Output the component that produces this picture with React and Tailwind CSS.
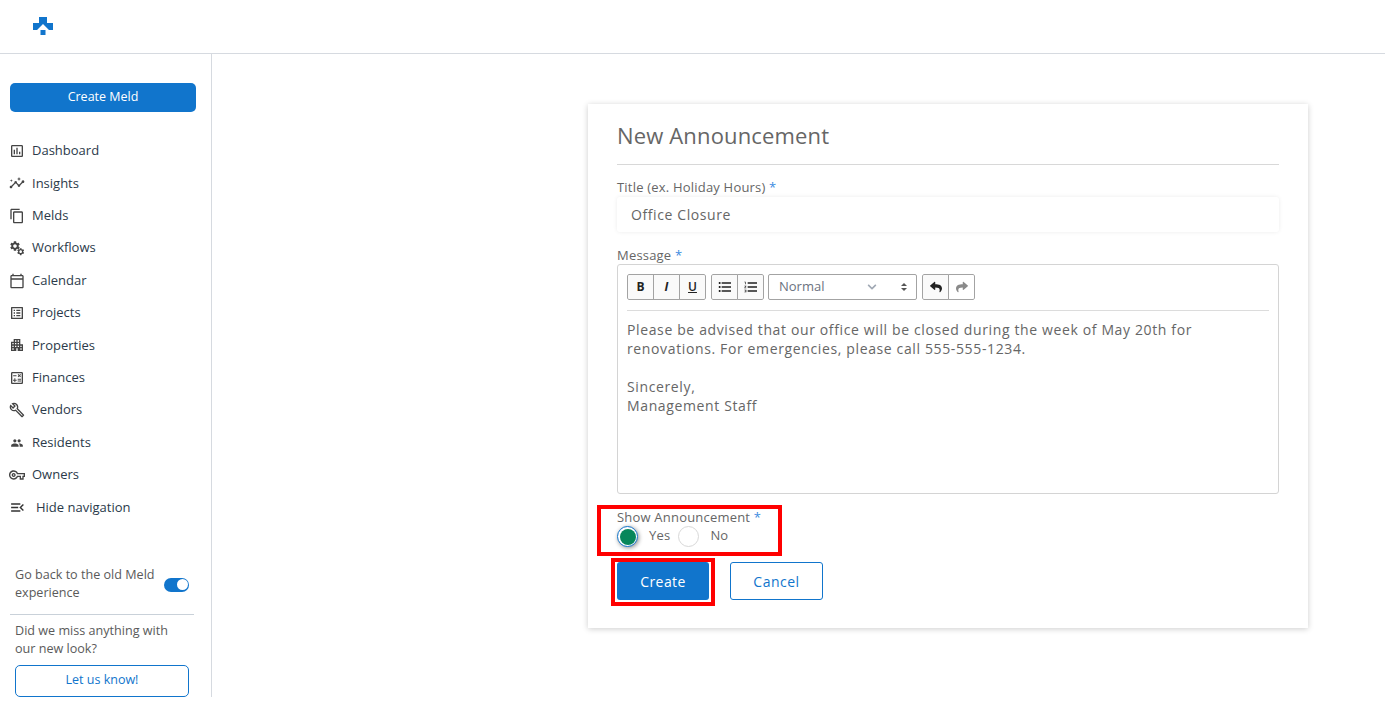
import React from 'react';
import {
  MdOutlineAssessment,
  MdOutlineInsights,
  MdOutlineContentCopy,
  MdOutlineListAlt,
  MdApartment,
  MdOutlineCalculate,
  MdOutlineBuild,
  MdPeople,
  MdOutlineVpnKey,
  MdMenuOpen,
  MdFormatListBulleted,
  MdFormatListNumbered,
  MdOutlineCalendarToday,
  MdSettings,
} from 'react-icons/md';
import { FaReply, FaShare, FaChevronDown } from 'react-icons/fa';

// two gears, big one top left and small one bottom right
const WorkflowIcon = ({ className }) => (
  <svg className={className} viewBox="0 0 24 24" fill="#444">
    <MdSettings x="0" y="0" size="18" />
    <MdSettings x="11" y="11" size="13" />
  </svg>
);

const ResidentsIcon = ({ className }) => <MdPeople className={`${className} scale-[0.8]`} />;

const navItems = [
  { label: 'Dashboard', icon: MdOutlineAssessment },
  { label: 'Insights', icon: MdOutlineInsights },
  { label: 'Melds', icon: MdOutlineContentCopy },
  { label: 'Workflows', icon: WorkflowIcon },
  { label: 'Calendar', icon: MdOutlineCalendarToday },
  { label: 'Projects', icon: MdOutlineListAlt },
  { label: 'Properties', icon: MdApartment },
  { label: 'Finances', icon: MdOutlineCalculate },
  { label: 'Vendors', icon: MdOutlineBuild },
  { label: 'Residents', icon: ResidentsIcon },
  { label: 'Owners', icon: MdOutlineVpnKey },
];

const Logo = () => (
  <svg width="20" height="18" viewBox="0 0 20 18" fill="#1175cc">
    <path d="M6 0H14V6H20V13H16L10 7L4 13H0V6H6z" />
    <rect x="7.5" y="13" width="5" height="5" />
  </svg>
);

const ToolButton = ({ children, className = '' }) => (
  <span className={`flex h-[26px] w-[27px] items-center justify-center border border-[#a3a3a3] bg-[#fafafa] text-[#222] ${className}`}>
    {children}
  </span>
);

const Sidebar = () => (
  <aside className="flex h-[643px] w-[212px] shrink-0 flex-col border-r border-[#d6dae0] px-[10px] pt-[29px]">
    <button className="h-[29px] w-[186px] rounded-[5px] bg-[#1175cc] pb-[1px] text-[12.5px] text-white">Create Meld</button>
    <nav className="mt-[22.8px] flex flex-col">
      {navItems.map(({ label, icon: Icon }) => (
        <a key={label} className="flex h-[32.4px] items-center gap-[7px] text-[13px] font-medium text-[#2b3a4a]">
          <Icon className="-ml-[1px] h-[16px] w-[16px] text-[#444]" />
          {label}
        </a>
      ))}
      <a className="flex h-[32.4px] items-center gap-[10px] text-[13px] font-medium text-[#2b3a4a]">
        <MdMenuOpen className="-ml-[1px] h-[17px] w-[17px] text-[#333]" />
        Hide navigation
      </a>
    </nav>
    <div className="mt-[42.2px] flex items-center justify-between pl-[5px] pr-[7px]">
      <p className="w-[146px] text-[12.6px] leading-[18px] text-[#5a5a5a]">Go back to the old Meld experience</p>
      <span className="mr-[5px] mt-[2px] flex h-[14px] w-[25px] items-center justify-end rounded-full bg-[#1175cc] pr-[1px]">
        <span className="h-[11px] w-[11px] rounded-full bg-white" />
      </span>
    </div>
    <div className="mt-[12px] w-[184px] border-t border-[#c9d1d9] pl-[5px] pt-[7px]">
      <p className="w-[160px] text-[12.6px] leading-[18px] text-[#5a5a5a]">Did we miss anything with our new look?</p>
      <button className="mt-[7px] h-[32px] w-[174px] rounded-[5px] border border-[#1175cc] text-[12.5px] text-[#1175cc]">Let us know!</button>
    </div>
  </aside>
);

const Toolbar = () => (
  <div className="flex items-center gap-[5px] border-b border-[#dcdcdc] pb-[10px]">
    <div className="flex overflow-hidden rounded-[2px]">
      <ToolButton className="rounded-l-[2px] text-[12px] font-bold">B</ToolButton>
      <ToolButton className="-ml-px text-[12px] font-bold italic">I</ToolButton>
      <ToolButton className="-ml-px rounded-r-[2px] text-[12px] font-semibold underline">U</ToolButton>
    </div>
    <div className="flex overflow-hidden rounded-[2px]">
      <ToolButton className="rounded-l-[2px]"><MdFormatListBulleted className="h-[16px] w-[16px]" /></ToolButton>
      <ToolButton className="-ml-px rounded-r-[2px]"><MdFormatListNumbered className="h-[16px] w-[16px]" /></ToolButton>
    </div>
    <div className="-ml-px flex h-[26px] w-[149px] items-center rounded-[2px] border border-[#a3a3a3] bg-white pl-[10px] pr-[9px] text-[13px] text-[#6b7280]">
      <span className="flex-1">Normal</span>
      <FaChevronDown className="mr-[24px] h-[10px] w-[10px] text-[#a0a8b4]" />
      <span className="flex flex-col gap-[2px]">
        <span className="h-0 w-0 border-x-[3px] border-b-[3px] border-x-transparent border-b-[#555]" />
        <span className="h-0 w-0 border-x-[3px] border-t-[3px] border-x-transparent border-t-[#555]" />
      </span>
    </div>
    <div className="flex overflow-hidden rounded-[2px]">
      <ToolButton className="rounded-l-[2px]"><FaReply className="h-[12px] w-[12px]" /></ToolButton>
      <ToolButton className="-ml-px rounded-r-[2px] bg-white"><FaShare className="h-[12px] w-[12px] text-[#8a8a8a]" /></ToolButton>
    </div>
  </div>
);

const Label = ({ children }) => (
  <label className="block text-[13px] leading-[17px] tracking-[0.2px] text-[#666]">
    {children} <span className="text-[#3b8be0]">*</span>
  </label>
);

const AnnouncementForm = () => (
  <section className="relative h-[524px] w-[720px] bg-white px-[29px] pt-[14px] shadow-[0_1px_6px_rgba(0,0,0,0.2)]">
    <h1 className="border-b border-[#d8d8d8] pb-[11px] text-[22px] leading-[35px] tracking-[0.15px] text-[#666]">New Announcement</h1>
    <div className="mt-[14px]">
      <Label>Title (ex. Holiday Hours)</Label>
      <div className="mt-[1px] flex h-[35px] items-center rounded-[3px] px-[14px] text-[14px] tracking-[0.6px] text-[#666] shadow-[0_0_4px_rgba(0,0,0,0.08)]">
        Office Closure
      </div>
    </div>
    <div className="mt-[15px]">
      <Label>Message</Label>
      <div className="h-[230px] rounded-[3px] border border-[#d4d4d4] px-[9px] pt-[9px]">
        <Toolbar />
        <div className="mt-[9px] text-[14px] leading-[19px] tracking-[0.63px] text-[#666]">
          <p>Please be advised that our office will be closed during the week of May 20th for<br />renovations. For emergencies, please call 555-555-1234.</p>
          <p className="mt-[19px]">Sincerely,<br />Management Staff</p>
        </div>
      </div>
    </div>
    <div className="relative mt-[15px]">
      <span className="block text-[13px] leading-[17px] tracking-[0.2px] text-[#666]">
        Show Announcement <span className="text-[#3b8be0]">*</span>
      </span>
      <div className="flex items-center text-[13px] tracking-[0.2px] text-[#666]">
        <span className="flex h-[21px] w-[21px] items-center justify-center rounded-full border border-[#1175cc] bg-white shadow-[1px_1px_4px_rgba(0,0,0,0.45)]">
          <span className="h-[16px] w-[16px] rounded-full bg-[#07865a]" />
        </span>
        <span className="-mt-[2px] ml-[11px]">Yes</span>
        <span className="ml-[8px] h-[21px] w-[21px] rounded-full border border-[#d8d8d8] bg-white" />
        <span className="-mt-[2px] ml-[11px]">No</span>
      </div>
      <div className="absolute -left-[20px] -top-[4px] h-[51px] w-[185px] border-[4px] border-[#ff0000]" />
    </div>
    <div className="relative mt-[15px] flex items-center gap-[21px]">
      <button className="h-[38px] w-[92px] rounded-[3px] bg-[#1175cc] text-[14px] font-medium tracking-[0.4px] text-white">Create</button>
      <button className="h-[38px] w-[93px] rounded-[3px] border border-[#1175cc] text-[14px] tracking-[0.5px] text-[#1175cc]">Cancel</button>
      <div className="absolute -left-[6px] -top-[4px] h-[48px] w-[104px] border-[4px] border-[#ff0000]" />
    </div>
  </section>
);

export default function App() {
  return (
    <div className="h-[706px] w-[1385px] overflow-hidden bg-white font-['Open_Sans',sans-serif]">
      <header className="flex h-[54px] items-start border-b border-[#d6dae0] pl-[33px] pt-[17px]">
        <Logo />
      </header>
      <div className="flex">
        <Sidebar />
        <main className="pl-[376px] pt-[50px]">
          <AnnouncementForm />
        </main>
      </div>
    </div>
  );
}
